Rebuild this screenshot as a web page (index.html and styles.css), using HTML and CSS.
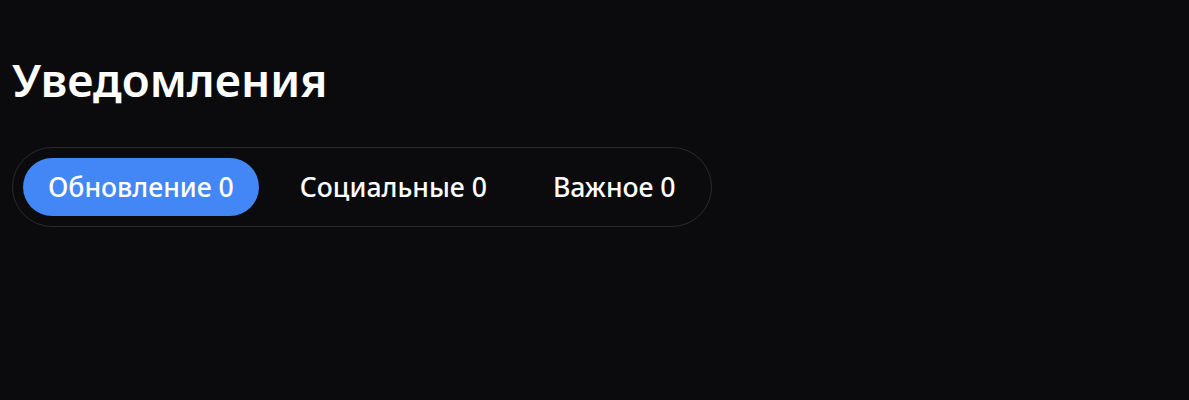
FILE: index.html
```html
<!DOCTYPE html>
<html lang="ru">
<head>
<meta charset="UTF-8">
<meta name="viewport" content="width=device-width, initial-scale=1.0">
<title>Уведомления</title>
<link rel="stylesheet" href="styles.css">
</head>
<body>
<div class="page">
    <h1 class="title">Уведомления</h1>
    <div class="tabs">
        <button class="tab active">Обновление 0</button>
        <button class="tab">Социальные 0</button>
        <button class="tab">Важное 0</button>
    </div>
</div>
</body>
</html>
```

FILE: styles.css
```css
body {
    margin: 0;
    background-color: #0b0b0e;
    color: #fff;
    font-family: "Noto Sans", "Open Sans", sans-serif;
}
.page {
    padding: 53px 12px;
}
.title {
    margin: 0 0 42px;
    font-size: 45.8px;
    font-weight: 600;
    line-height: 52px;
}
.tabs {
    display: inline-flex;
    gap: 16px;
    padding: 10px;
    border: 1px solid #2a2a2e;
    border-radius: 40px;
}
.tab {
    height: 58px;
    padding: 0 25px;
    border: none;
    border-radius: 30px;
    background: none;
    color: #fff;
    font-family: inherit;
    font-size: 26.6px;
    font-weight: 500;
    cursor: pointer;
}
.tab.active {
    background-color: #4287f5;
}
```
